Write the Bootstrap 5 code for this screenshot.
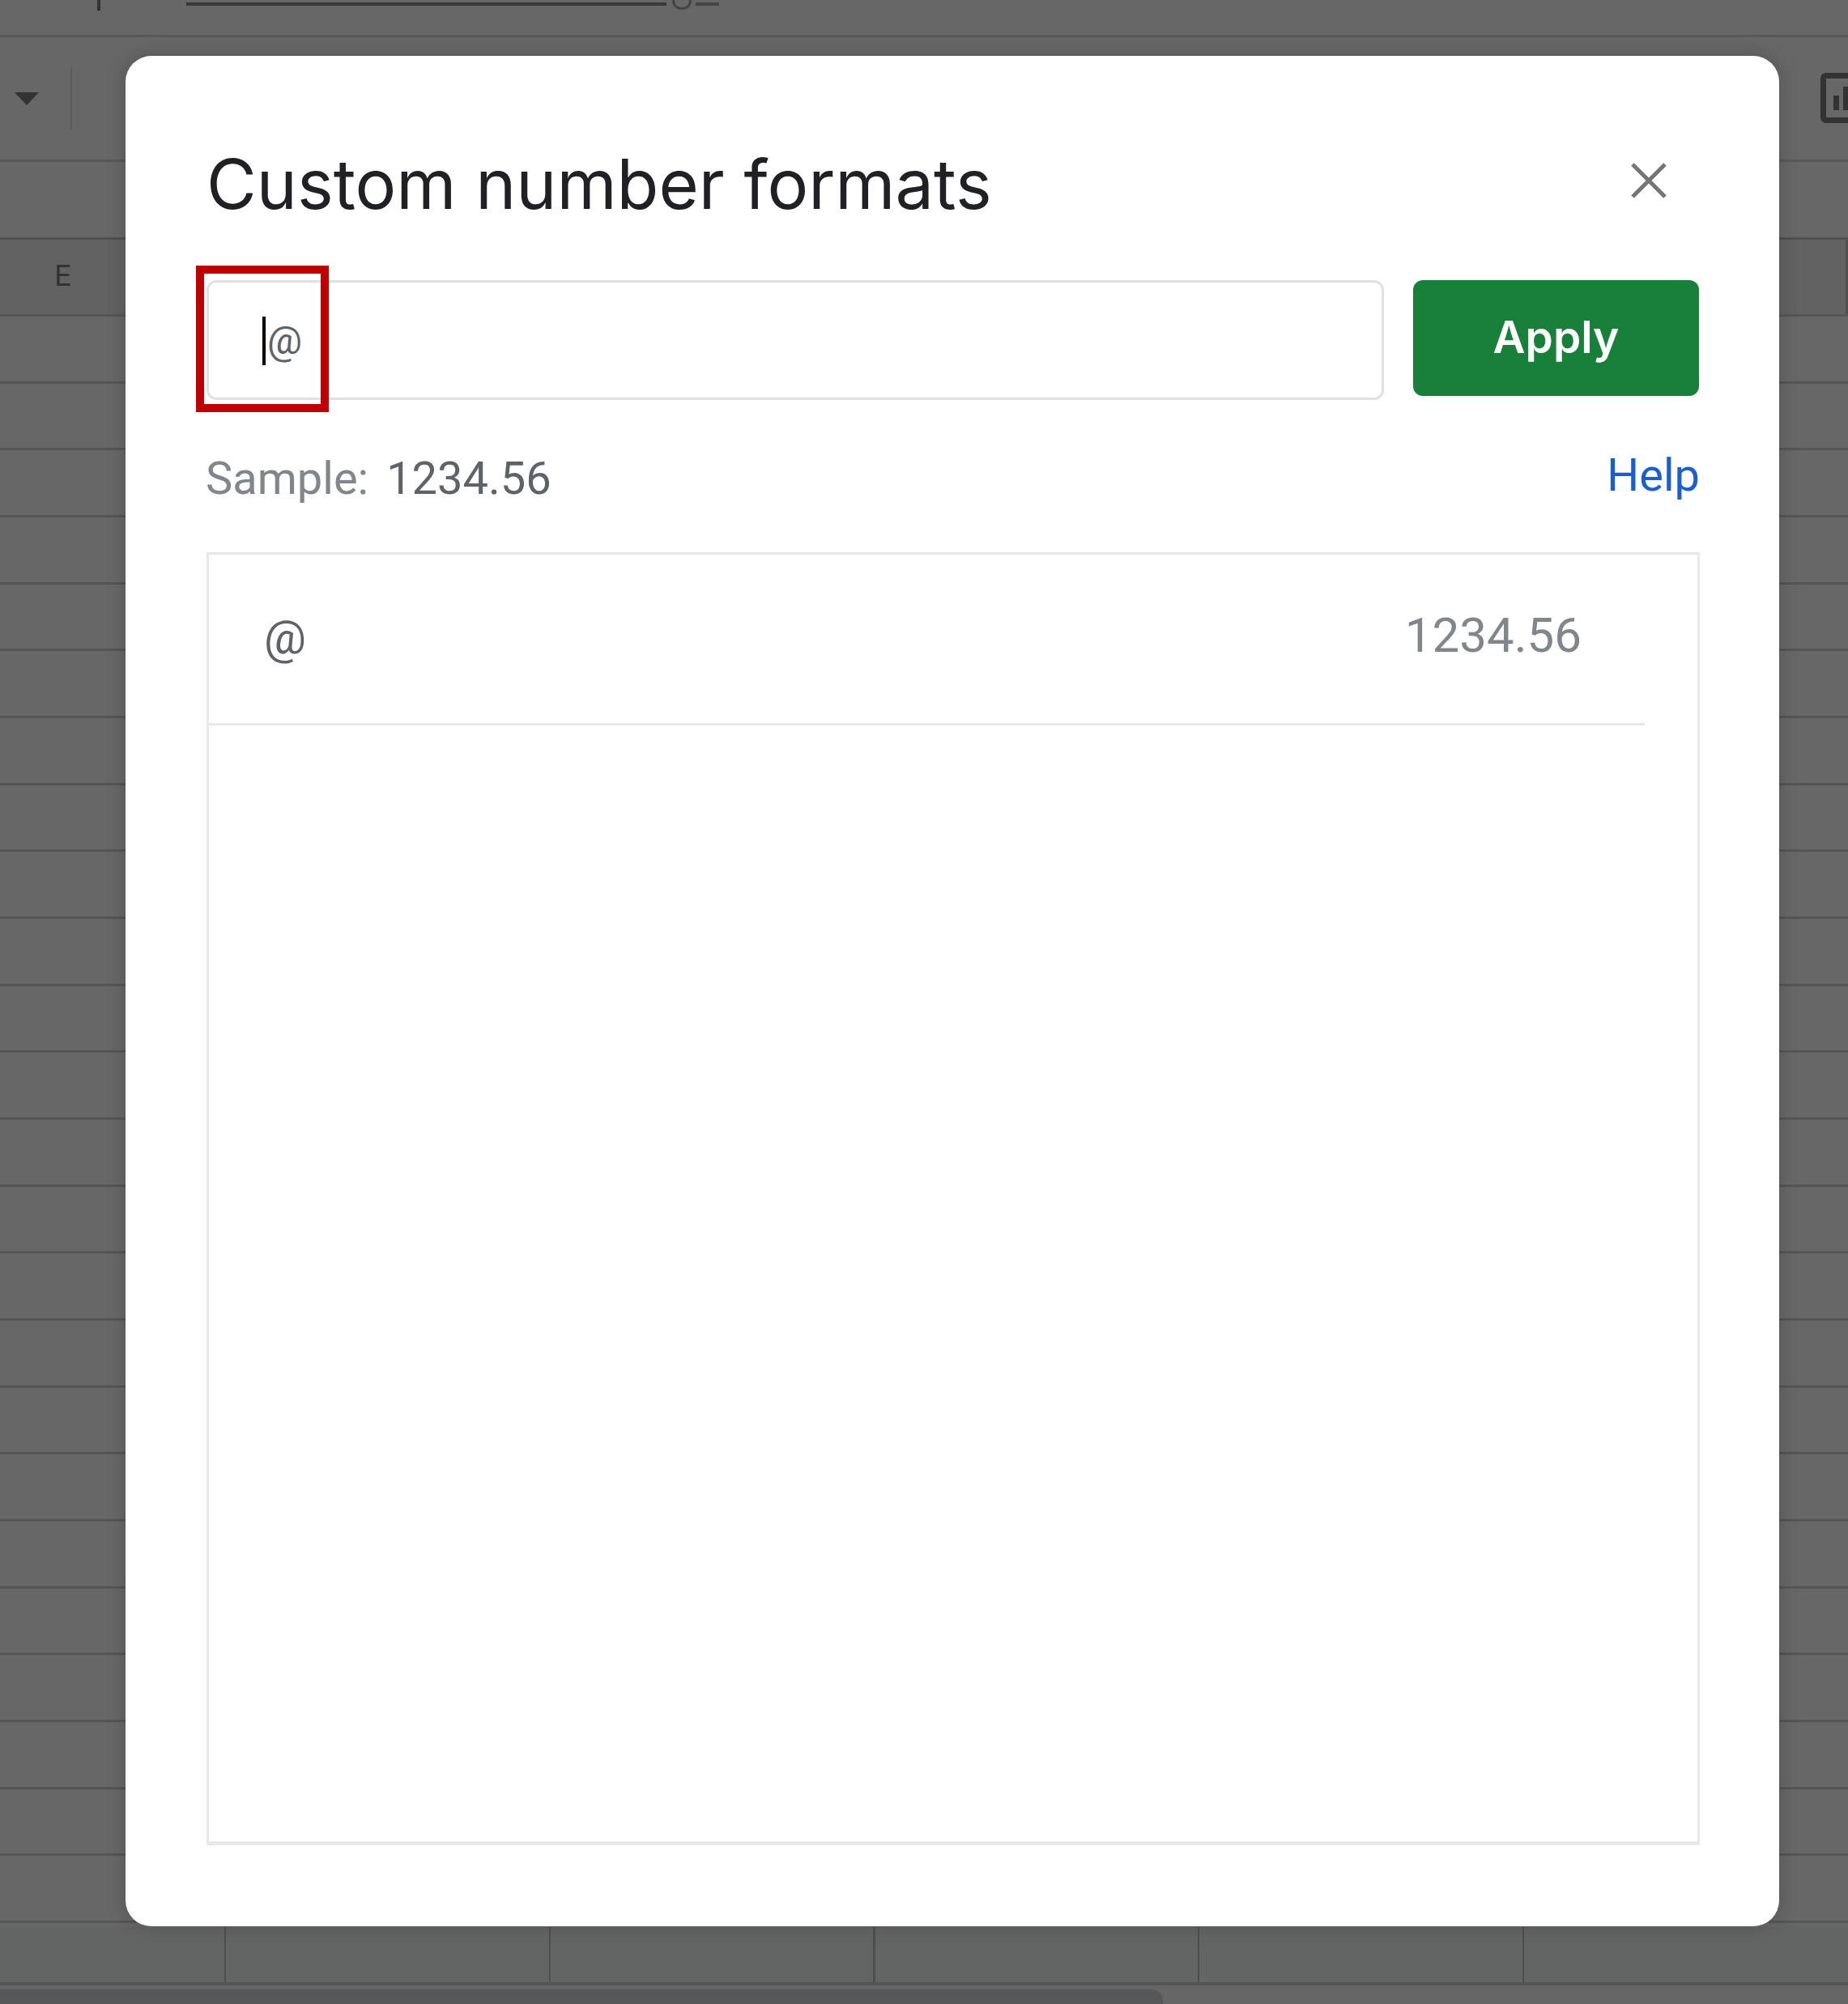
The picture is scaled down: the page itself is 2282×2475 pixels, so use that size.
<!DOCTYPE html>
<html lang="en">
<head>
<meta charset="utf-8">
<title>Custom number formats</title>
<link href="https://cdn.jsdelivr.net/npm/bootstrap@5.3.0/dist/css/bootstrap.min.css" rel="stylesheet">
<style>
html,body{margin:0;width:2282px;height:2475px;overflow:hidden;background:#686868}
.sheet-back{position:absolute;inset:0;background-color:#676767;
 background-image:repeating-linear-gradient(to bottom,#555 0,#555 3px,transparent 3px,transparent 82.67px);
 background-position:0 388px;background-repeat:no-repeat;background-size:100% 2070px}
.sheet-line{position:absolute;left:0;right:0;height:3px;background:#585858}
.sheet-header{position:absolute;left:0;right:0;top:293px;height:95px;background:#626262;border-top:3px solid #505050;border-right:3px solid #505050}
.sheet-col-e{position:absolute;left:67px;top:322px;font:400 36px "Inter",sans-serif;color:#333;line-height:1}
.sheet-tri{position:absolute;left:18px;top:114px;width:0;height:0;border-left:15px solid transparent;border-right:15px solid transparent;border-top:16px solid #333}
.sheet-sep{position:absolute;left:87px;top:83px;width:2px;height:78px;background:#5a5a5a}
.sheet-title-bar{position:absolute;left:230px;top:3px;width:593px;height:4px;background:#3a3a3a}
.sheet-title-tail{position:absolute;left:859px;top:3px;width:29px;height:4px;background:#444}
.sheet-title-g{position:absolute;left:830px;top:-8px;width:24px;height:20px;border:3px solid #444;border-top:0;border-radius:0 0 11px 11px}
.sheet-cursor{position:absolute;left:120px;top:0;width:4px;height:13px;background:#333}
.sheet-ticks{position:absolute;left:0;right:0;top:2380px;height:70px;background-image:repeating-linear-gradient(to right,#4f4f4f 0,#4f4f4f 2px,transparent 2px,transparent 400.75px);background-position:277px 0;background-repeat:no-repeat;background-size:1606px 100%;background-color:#636564}
.sheet-foot{position:absolute;left:0;right:0;top:2448px;height:27px;background:#666;border-top:4px solid #545454}
.sheet-scroll{position:absolute;left:0;top:2457px;width:1436px;height:18px;background:#555759;border-top-right-radius:14px}
.sheet-chart{position:absolute;left:2248px;top:90px;width:60px;height:62px;color:#333}
.fmt-page{position:relative;padding:69px 0 0 155px}
.fmt-dialog{width:2042px;height:2310px;background:#fff;border:0;border-radius:32px;padding:0 98px 0 100px;box-shadow:0 0 24px rgba(0,0,0,.18)}
.fmt-head{height:277px;padding-top:108px}
.fmt-title{font:400 84.7px/1.2 "Inter",sans-serif;color:#202124;margin:0}
.fmt-close{width:44px;height:44px;margin:24px 41px 0 0;padding:0;background:none;border:0;color:#757575;line-height:0}
.fmt-row{gap:36px;height:148px}
.fmt-field{width:1454px;height:148px;border:3px solid #dfe1e5;border-radius:12px;padding:48px 0 0 72px;background:#fff;font:400 48px/1 "Roboto",sans-serif;color:#5f6368;position:relative}
.fmt-caret{position:absolute;left:66px;top:42px;width:4px;height:60px;background:#000}
.fmt-marker{position:absolute;left:242px;top:328px;width:164px;height:181px;border:10px solid #bf0000;pointer-events:none}
.fmt-apply{width:353px;height:143px;border:0;border-radius:12px;background:#188038;color:#fff;font:600 55px/1 "Inter",sans-serif;padding:0 0 3px}
.fmt-apply:hover{background:#188038;color:#fff}
.fmt-meta{font:400 56px/1 "Roboto",sans-serif;height:188px;padding-top:69px}
.fmt-sample{color:#80868b;margin-left:-1px}
.fmt-value{color:#5f6368;margin-left:22px}
.fmt-help{color:#1a5fd0;text-decoration:none;margin-top:-4px}
.card>.fmt-list,.card>.fmt-list:last-child{height:1597px;border:3px solid #e8e8e8;border-bottom-width:5px;border-radius:0;display:block}
.fmt-item{width:1773px;height:211px;margin-left:0;border:0;border-bottom:3px solid #e8e8e8;border-radius:0;padding:0 78px 0 68px;background:transparent}
.fmt-at{font:400 58px/1 "Roboto",sans-serif;color:#5f6368;margin-bottom:5px}
.fmt-num{font:400 60px/1 "Roboto",sans-serif;color:#80868b;margin-bottom:9px}
</style>
</head>
<body>
<div class="sheet-back">
  <div class="sheet-line" style="top:43px"></div>
  <div class="sheet-line" style="top:197px"></div>
  <div class="sheet-header"></div>
  <div class="sheet-ticks"></div>
  <div class="sheet-foot"></div>
  <div class="sheet-scroll"></div>
  <div class="sheet-cursor"></div>
  <div class="sheet-title-bar"></div>
  <div class="sheet-title-tail"></div>
  <div class="sheet-title-g"></div>
  <div class="sheet-tri"></div>
  <div class="sheet-sep"></div>
  <div class="sheet-col-e">E</div>
  <svg class="sheet-chart" viewBox="0 0 60 62" aria-hidden="true"><rect x="3.5" y="3.5" width="53" height="55" rx="3" fill="none" stroke="currentColor" stroke-width="7"/><path d="M16 28h7v18h-7zM28 17h8v29h-8z" fill="currentColor"/></svg>
</div>
<div class="fmt-page">
  <div class="card fmt-dialog">
    <div class="d-flex justify-content-between align-items-start fmt-head">
      <h1 class="fmt-title">Custom number formats</h1>
      <button class="fmt-close" type="button" aria-label="Close">
        <svg width="44" height="44" viewBox="0 0 44 44" aria-hidden="true"><path d="M2 2 42 42M42 2 2 42" stroke="currentColor" stroke-width="5" fill="none"/></svg>
      </button>
    </div>
    <div class="d-flex align-items-start fmt-row">
      <div class="fmt-field">@<span class="fmt-caret"></span></div>
      <button class="btn fmt-apply" type="button">Apply</button>
    </div>
    <div class="d-flex justify-content-between align-items-start fmt-meta">
      <div><span class="fmt-sample">Sample:</span><span class="fmt-value">1234.56</span></div>
      <a class="fmt-help" href="#">Help</a>
    </div>
    <div class="list-group fmt-list">
      <div class="list-group-item d-flex justify-content-between align-items-center fmt-item">
        <span class="fmt-at">@</span><span class="fmt-num">1234.56</span>
      </div>
    </div>
  </div>
  <div class="fmt-marker"></div>
</div>
</body>
</html>
